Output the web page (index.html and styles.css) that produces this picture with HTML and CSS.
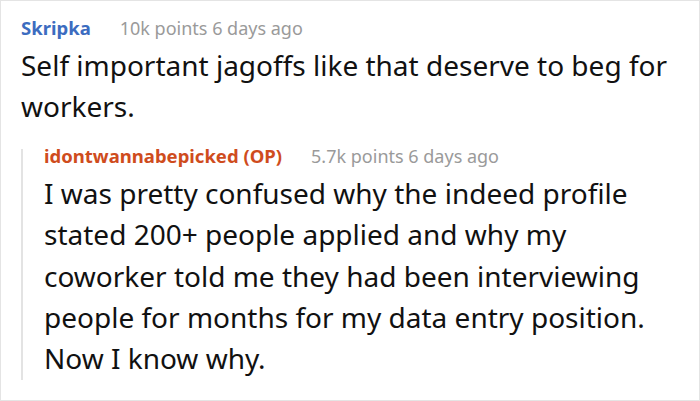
FILE: index.html
```html
<!DOCTYPE html>
<html lang="en">
<head>
<meta charset="utf-8">
<title>Comment thread</title>
<link rel="stylesheet" href="styles.css">
</head>
<body>
<div class="card">
  <div class="comment">
    <div class="meta">
      <span class="user">Skripka</span>
      <span class="info">10k points 6 days ago</span>
    </div>
    <p class="text">Self important jagoffs like that deserve to beg for workers.</p>
    <div class="reply">
      <div class="meta">
        <span class="user op">idontwannabepicked (OP)</span>
        <span class="info">5.7k points 6 days ago</span>
      </div>
      <p class="text">I was pretty confused why the indeed profile stated 200+ people applied and why my coworker told me they had been interviewing people for months for my data entry position. Now I know why.</p>
    </div>
  </div>
</div>
</body>
</html>
```
FILE: styles.css
```css
html, body {
  margin: 0;
  padding: 0;
  background: #ffffff;
}
.card {
  box-sizing: border-box;
  width: 700px;
  height: 401px;
  border: 1px solid #e4e4e4;
  padding: 20px 20px 0 20px;
  font-family: "Noto Sans", "Open Sans", sans-serif;
  overflow: hidden;
}
.meta {
  display: flex;
  align-items: baseline;
  gap: 29px;
  line-height: 14px;
  margin-bottom: 10.2px;
}
.user {
  font-size: 18.5px;
  font-weight: 700;
  color: #3c6cc0;
}
.user.op {
  color: #cf4c1d;
}
.info {
  font-size: 18px;
  color: #9a9a9a;
}
.text {
  margin: 0;
  font-size: 28px;
  line-height: 41.3px;
  color: #111111;
}
.reply {
  margin-top: 21.2px;
  border-left: 2px solid #e3e3e3;
  padding-left: 21px;
}
```
